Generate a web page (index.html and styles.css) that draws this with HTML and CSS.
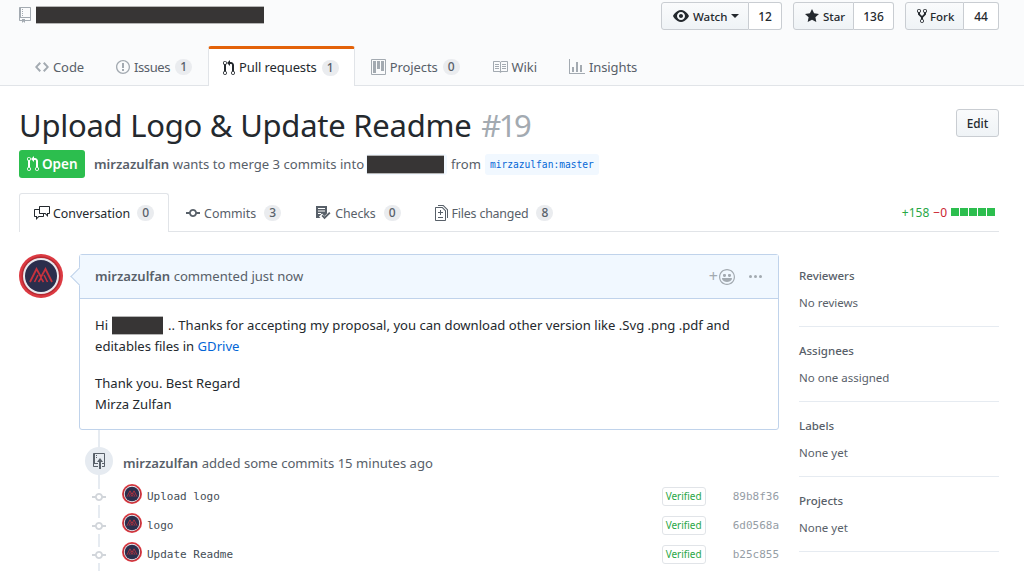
FILE: index.html
```html
<!DOCTYPE html>
<html lang="en">
<head>
<meta charset="utf-8">
<title>Upload Logo &amp; Update Readme</title>
<link rel="stylesheet" href="styles.css">
</head>
<body>
<svg class="defs" width="0" height="0" aria-hidden="true">
  <symbol id="logo" viewBox="0 0 44 44">
    <circle cx="22" cy="22" r="22" fill="#dc3a42"/>
    <circle cx="22" cy="22" r="19.500" fill="#b32a33"/>
    <circle cx="22" cy="22" r="18" fill="#e9e9ee"/>
    <circle cx="22" cy="22" r="16" fill="#2b2e4c"/>
    <path d="M11 28l6.500-13 4.500 8 4.500-8L33 28" fill="none" stroke="#c8323d" stroke-width="1.800"/>
    <path d="M15.500 28l3.500-7M28.500 28L25 21M19.500 28l2.500-4 2.500 4" fill="none" stroke="#c8323d" stroke-width="1.600"/>
  </symbol>
  <symbol id="commit" viewBox="0 0 14 16"><path d="M10.86 7c-.45-1.72-2-3-3.86-3-1.86 0-3.41 1.28-3.86 3H0v2h3.14c.45 1.72 2 3 3.86 3 1.86 0 3.41-1.28 3.86-3H14V7h-3.14zM7 10.2c-1.22 0-2.2-.98-2.2-2.2 0-1.22.98-2.2 2.2-2.2 1.22 0 2.2.98 2.2 2.2 0 1.22-.98 2.2-2.2 2.2z"/></symbol>
  <symbol id="pr" viewBox="0 0 12 16"><path d="M11 11.28V5c-.03-.78-.34-1.47-.94-2.06C9.46 2.35 8.78 2.03 8 2H7V0L4 3l3 3V4h1c.27.02.48.11.69.31.21.2.3.42.31.69v6.28A1.993 1.993 0 0 0 10 15a1.993 1.993 0 0 0 1-3.72zm-1 2.92c-.66 0-1.2-.55-1.2-1.2 0-.65.55-1.2 1.2-1.2.65 0 1.2.55 1.2 1.2 0 .65-.55 1.2-1.2 1.2zM4 3c0-1.11-.89-2-2-2a1.993 1.993 0 0 0-1 3.72v6.56A1.993 1.993 0 0 0 2 15a1.993 1.993 0 0 0 1-3.72V4.72c.59-.34 1-.98 1-1.72zm-.8 10c0 .66-.55 1.2-1.2 1.2-.65 0-1.2-.55-1.2-1.2 0-.65.55-1.2 1.2-1.2.65 0 1.2.55 1.2 1.2zM2 4.2C1.34 4.2.8 3.65.8 3c0-.65.55-1.2 1.2-1.2.65 0 1.2.55 1.2 1.2 0 .65-.55 1.2-1.2 1.2z"/></symbol>
</svg>

<header class="head">
  <div class="head-top">
    <div class="repo">
      <svg class="ico repo-ico" width="12" height="16" viewBox="0 0 12 16"><path d="M4 9H3V8h1v1zm0-3H3v1h1V6zm0-2H3v1h1V4zm0-2H3v1h1V2zm8-1v12c0 .55-.45 1-1 1H6v2l-1.5-1.5L3 16v-2H1c-.55 0-1-.45-1-1V1c0-.55.45-1 1-1h10c.55 0 1 .45 1 1zm-1 10H1v2h2v-1h3v1h5v-2zm0-10H2v9h9V1z"/></svg>
      <span class="redact redact-repo"></span>
    </div>
    <div class="actions">
      <div class="btn-group">
        <span class="btn btn-watch"><svg class="ico ico-dark" width="16" height="16" viewBox="0 0 16 16"><path d="M8.06 2C3 2 0 8 0 8s3 6 8.06 6C13 14 16 8 16 8s-3-6-7.94-6zM8 12c-2.2 0-4-1.78-4-4 0-2.2 1.8-4 4-4 2.22 0 4 1.8 4 4 0 2.22-1.78 4-4 4zm2-4c0 1.11-.89 2-2 2-1.11 0-2-.89-2-2 0-1.11.89-2 2-2 1.11 0 2 .89 2 2z"/></svg>Watch<i class="caret"></i></span>
        <span class="social w-watch">12</span>
      </div>
      <div class="btn-group">
        <span class="btn btn-star"><svg class="ico ico-dark" width="14" height="16" viewBox="0 0 14 16"><path d="M14 6l-4.9-.64L7 1 4.9 5.36 0 6l3.6 3.26L2.67 14 7 11.67 11.33 14l-.93-4.74L14 6z"/></svg>Star</span>
        <span class="social w-star">136</span>
      </div>
      <div class="btn-group">
        <span class="btn btn-fork"><svg class="ico ico-dark" width="10" height="16" viewBox="0 0 10 16"><path d="M8 1a1.993 1.993 0 0 0-1 3.72V6L5 8 3 6V4.72A1.993 1.993 0 0 0 2 1a1.993 1.993 0 0 0-1 3.72V6.5l3 3v1.78A1.993 1.993 0 0 0 5 15a1.993 1.993 0 0 0 1-3.72V9.5l3-3V4.72A1.993 1.993 0 0 0 8 1zM2 4.2C1.34 4.2.8 3.65.8 3c0-.65.55-1.2 1.2-1.2.65 0 1.2.55 1.2 1.2 0 .65-.55 1.2-1.2 1.2zm3 10c-.66 0-1.2-.55-1.2-1.2 0-.65.55-1.2 1.2-1.2.65 0 1.2.55 1.2 1.2 0 .65-.55 1.2-1.2 1.2zm3-10c-.66 0-1.2-.55-1.2-1.2 0-.65.55-1.2 1.2-1.2.65 0 1.2.55 1.2 1.2 0 .65-.55 1.2-1.2 1.2z"/></svg>Fork</span>
        <span class="social w-fork">44</span>
      </div>
    </div>
  </div>
  <nav class="repo-nav">
    <a class="rtab"><svg class="ico" width="14" height="16" viewBox="0 0 14 16"><path d="M9.5 3L8 4.5 11.5 8 8 11.5 9.5 13 14 8 9.5 3zm-5 0L0 8l4.5 5L6 11.5 2.5 8 6 4.5 4.5 3z"/></svg>Code</a>
    <a class="rtab rtab-issues"><svg class="ico" width="14" height="16" viewBox="0 0 14 16"><path d="M7 2.3c3.14 0 5.7 2.56 5.7 5.7s-2.56 5.7-5.7 5.7A5.71 5.71 0 0 1 1.3 8c0-3.14 2.56-5.7 5.7-5.7zM7 1C3.14 1 0 4.14 0 8s3.14 7 7 7 7-3.14 7-7-3.14-7-7-7zm1 3H6v5h2V4zm0 6H6v2h2v-2z"/></svg>Issues<span class="count">1</span></a>
    <a class="rtab rtab-on"><svg class="ico ico-dark" width="12" height="16"><use href="#pr"/></svg>Pull requests<span class="count">1</span></a>
    <a class="rtab"><svg class="ico" width="15" height="16" viewBox="0 0 15 16"><path d="M10 12h3V2h-3v10zm-4-2h3V2H6v8zm-4 4h3V2H2v12zm-1 1h13V1H1v14zM14 0H1a1 1 0 0 0-1 1v14a1 1 0 0 0 1 1h13a1 1 0 0 0 1-1V1a1 1 0 0 0-1-1z"/></svg>Projects<span class="count">0</span></a>
    <a class="rtab"><svg class="ico" width="16" height="16" viewBox="0 0 16 16"><path d="M3 5h4v1H3V5zm0 3h4V7H3v1zm0 2h4V9H3v1zm11-5h-4v1h4V5zm0 2h-4v1h4V7zm0 2h-4v1h4V9zm2-6v9c0 .55-.45 1-1 1H9.5l-1 1-1-1H2c-.55 0-1-.45-1-1V3c0-.55.45-1 1-1h5.5l1 1 1-1H15c.55 0 1 .45 1 1zm-8 .5L7.5 3H2v9h6V3.5zm7-.5H9.5l-.5.5V12h6V3z"/></svg>Wiki</a>
    <a class="rtab"><svg class="ico" width="16" height="16" viewBox="0 0 16 16"><path d="M16 14v1H0V0h1v14h15zM5 13H3V8h2v5zm4 0H7V3h2v10zm4 0h-2V6h2v7z"/></svg>Insights</a>
  </nav>
</header>

<main class="page">
  <div class="title-row">
    <h1 class="title">Upload Logo &amp; Update Readme <span class="num">#19</span></h1>
    <span class="edit">Edit</span>
  </div>
  <div class="state-row">
    <span class="state"><svg class="ico ico-white" width="12" height="16"><use href="#pr"/></svg>Open</span>
    <span class="meta"><b>mirzazulfan</b> wants to merge 3 commits into</span>
    <span class="ref ref-base"><span class="redact redact-ref"></span></span>
    <span class="meta">from</span>
    <span class="ref">mirzazulfan:master</span>
  </div>

  <div class="pr-tabs">
    <a class="ptab ptab-on"><svg class="ico ico-dark" width="16" height="16" viewBox="0 0 16 16"><path d="M15 1H6c-.55 0-1 .45-1 1v2H1c-.55 0-1 .45-1 1v6c0 .55.45 1 1 1h1v3l3-3h4c.55 0 1-.45 1-1V9h1l3 3V9h1c.55 0 1-.45 1-1V2c0-.55-.45-1-1-1zM9 11H4.5L3 12.5V11H1V5h4v3c0 .55.45 1 1 1h3v2zm6-3h-2v1.5L11.5 8H6V2h9v6z"/></svg>Conversation<span class="count">0</span></a>
    <a class="ptab"><svg class="ico ico-mid" width="14" height="16"><use href="#commit"/></svg>Commits<span class="count">3</span></a>
    <a class="ptab ptab-checks"><svg class="ico ico-mid" width="16" height="16" viewBox="0 0 16 16"><path d="M1 1h11v7.500L9.500 11 7 8.500l-3 3 1.500 1.500H1zM3 3v1h7V3zm0 2.500v1h7v-1zM3 8v1h3V8z"/><path d="M6.500 11l1.300-1.300 1.700 1.700L14.200 7l1.300 1.300-6 6z"/></svg>Checks<span class="count">0</span></a>
    <a class="ptab ptab-files"><svg class="ico ico-mid" width="13" height="16" viewBox="0 0 13 16"><path d="M6 7h2v1H6v2H5V8H3V7h2V5h1v2zm-3 6h5v-1H3v1zM7.500 2L11 5.500V15c0 .55-.45 1-1 1H1c-.55 0-1-.45-1-1V3c0-.55.45-1 1-1h6.500zM10 6L7 3H1v12h9V6zM8.500 0H3v1h5l4 4v8h1V4.500L8.500 0z"/></svg>Files changed<span class="count">8</span></a>
    <div class="stats">
      <span class="add">+158</span>
      <span class="del">−0</span>
      <span class="blocks"><i></i><i></i><i></i><i></i><i></i></span>
    </div>
  </div>

  <div class="layout">
    <section class="discussion">
      <div class="thread">
        <svg class="avatar" width="44" height="44"><use href="#logo"/></svg>
        <article class="comment">
          <div class="comment-head">
            <span class="comment-who"><b>mirzazulfan</b> commented just now</span>
            <span class="comment-tools">
              <span class="plus">+</span>
              <svg class="ico" width="16" height="16" viewBox="0 0 16 16"><path d="M8 0C3.580 0 0 3.580 0 8s3.580 8 8 8 8-3.580 8-8-3.580-8-8-8zm4.810 12.810a6.720 6.720 0 0 1-2.170 1.450c-.83.36-1.720.53-2.640.53-.92 0-1.810-.17-2.640-.53-.81-.34-1.550-.83-2.170-1.450a6.773 6.773 0 0 1-1.450-2.170A6.590 6.590 0 0 1 1.210 8c0-.92.17-1.810.53-2.640.34-.81.83-1.550 1.450-2.170.62-.62 1.360-1.110 2.170-1.450A6.590 6.590 0 0 1 8 1.210c.92 0 1.810.17 2.640.53.81.34 1.550.83 2.170 1.450.62.62 1.110 1.360 1.450 2.170.36.83.53 1.720.53 2.640 0 .92-.17 1.810-.53 2.640-.34.81-.83 1.550-1.450 2.170zM4 6.800v-.59c0-.66.53-1.190 1.200-1.190h.59c.66 0 1.190.53 1.190 1.190v.59c0 .67-.53 1.200-1.190 1.200H5.200C4.530 8 4 7.470 4 6.800zm5 0v-.59c0-.66.53-1.190 1.200-1.190h.59c.66 0 1.190.53 1.190 1.190v.59c0 .67-.53 1.200-1.190 1.200h-.59C9.530 8 9 7.470 9 6.800zm4 3.200c-.72 1.880-2.910 3-5 3s-4.280-1.130-5-3c-.14-.39.23-1 .66-1h8.590c.41 0 .89.61.75 1z"/></svg>
              <svg class="ico kebab" width="13" height="16" viewBox="0 0 13 16"><path d="M1.500 9a1.500 1.500 0 1 0 0-3 1.500 1.500 0 0 0 0 3zm5 0a1.500 1.500 0 1 0 0-3 1.500 1.500 0 0 0 0 3zM13 7.500a1.500 1.500 0 1 1-3 0 1.500 1.500 0 0 1 3 0z"/></svg>
            </span>
          </div>
          <div class="comment-body">
            <p>Hi <span class="redact redact-name"></span> .. Thanks for accepting my proposal, you can download other version like .Svg .png .pdf and<br>editables files in <a class="link">GDrive</a></p>
            <p>Thank you. Best Regard<br>Mirza Zulfan</p>
          </div>
        </article>
      </div>

      <div class="timeline">
        <div class="push">
          <span class="push-badge"><svg class="ico ico-mid" width="12" height="16" viewBox="0 0 12 16"><path d="M4 3H3V2h1v1zM3 5h1V4H3v1zm4 0L4 9h2v7h2V9h2L7 5zm4-5H1C.45 0 0 .45 0 1v12c0 .55.45 1 1 1h4v-1H1v-2h4v-1H2V1h9.020L11 10H9v1h2v2H9v1h2c.55 0 1-.45 1-1V1c0-.55-.45-1-1-1z"/></svg></span>
          <span class="push-text"><b>mirzazulfan</b> added some commits 15 minutes ago</span>
        </div>
        <div class="crow">
          <svg class="cdot" width="14" height="16"><use href="#commit"/></svg>
          <svg class="cavatar" width="20" height="20"><use href="#logo"/></svg>
          <span class="cmsg">Upload logo</span>
          <span class="verified">Verified</span>
          <span class="sha">89b8f36</span>
        </div>
        <div class="crow">
          <svg class="cdot" width="14" height="16"><use href="#commit"/></svg>
          <svg class="cavatar" width="20" height="20"><use href="#logo"/></svg>
          <span class="cmsg">logo</span>
          <span class="verified">Verified</span>
          <span class="sha">6d0568a</span>
        </div>
        <div class="crow">
          <svg class="cdot" width="14" height="16"><use href="#commit"/></svg>
          <svg class="cavatar" width="20" height="20"><use href="#logo"/></svg>
          <span class="cmsg">Update Readme</span>
          <span class="verified">Verified</span>
          <span class="sha">b25c855</span>
        </div>
      </div>
    </section>

    <aside class="sidebar">
      <div class="side"><h3>Reviewers</h3><p>No reviews</p></div>
      <div class="side"><h3>Assignees</h3><p>No one assigned</p></div>
      <div class="side"><h3>Labels</h3><p>None yet</p></div>
      <div class="side"><h3>Projects</h3><p>None yet</p></div>
    </aside>
  </div>
</main>
</body>
</html>
```
FILE: styles.css
```css
* { box-sizing: border-box; }
html, body { margin: 0; padding: 0; height: 571px; overflow: hidden; }
body { font-family: "Noto Sans", "Open Sans", sans-serif; font-size: 13.1px; color: #24292e; background: #fff; line-height: 21px; }
.defs { position: absolute; }
b { font-weight: 600; }
.ico { fill: #a3aab1; fill-rule: evenodd; flex: none; display: block; }
.ico-dark { fill: #24292e; }
.ico-mid { fill: #586069; }
.ico-white { fill: #fff; }

.head { height: 86px; background: #fafbfc; border-bottom: 1px solid #e1e4e8; }
.head-top { height: 46px; padding: 2px 25px 0 19px; display: flex; justify-content: space-between; }
.repo { display: flex; gap: 5px; align-items: flex-start; }
.repo-ico { margin-top: 5px; }
.redact { display: inline-block; background: #373535; border: 1px solid #b5b5b5; border-width: 1px 0; }
.redact-repo { width: 228px; height: 18px; margin-top: 4px; }
.actions { display: flex; gap: 11px; }
.btn-group { display: flex; height: 28px; }
.btn { display: flex; align-items: center; gap: 4px; height: 28px; padding-left: 11px; background: linear-gradient(#fafbfc, #eff3f6); border: 1px solid #c9cdd2; border-radius: 3px 0 0 3px; font-weight: 500; font-size: 11.500px; }
.btn-watch { width: 88px; }
.btn-star { width: 61px; }
.btn-fork { width: 59px; gap: 3px; }
.caret { width: 0; height: 0; border: 4px solid transparent; border-top-color: #24292e; border-bottom: 0; }
.social { display: flex; align-items: center; justify-content: center; height: 28px; background: #fff; border: 1px solid #c9cdd2; border-left: 0; border-radius: 0 3px 3px 0; font-weight: 500; font-size: 12px; }
.w-watch { width: 33px; }
.w-star { width: 40px; }
.w-fork { width: 35px; }

.repo-nav { display: flex; padding-left: 19px; height: 40px; }
.rtab { display: flex; align-items: center; gap: 4px; padding: 2px 16px 0; height: 40px; font-size: 13px; letter-spacing: -.1px; color: #586069; }
.rtab-issues { letter-spacing: -.4px; }
.rtab-on { padding: 0 15px 0 14px; color: #24292e; background: #fff; border: 1px solid #e1e4e8; border-top: 3px solid #e36209; border-bottom: 0; border-radius: 3px 3px 0 0; }
.count { display: inline-block; width: 17px; height: 16px; margin-left: 1px; border-radius: 8px; line-height: 16px; font-size: 12px; font-weight: 500; letter-spacing: 0; color: #586069; background: #eaecef; text-align: center; }

.page { padding: 0 25px 0 19px; }
.title-row { display: flex; justify-content: space-between; align-items: flex-start; padding-top: 19px; height: 64px; }
.title { margin: 0; font-size: 31px; font-weight: 400; line-height: 40px; letter-spacing: -.25px; }
.num { color: #a3aab1; margin-left: 2px; letter-spacing: -2.500px; }
.edit { display: flex; align-items: center; justify-content: center; width: 43px; height: 28px; margin-top: 4px; font-size: 11.800px; font-weight: 500; background: linear-gradient(#fafbfc, #eff3f6); border: 1px solid #c9cdd2; border-radius: 3px; }
.state-row { display: flex; align-items: center; height: 28px; color: #586069; }
.state { display: flex; align-items: center; gap: 3px; width: 66px; height: 28px; padding-left: 8px; background: #2cbe4e; color: #fff; font-weight: 600; font-size: 13.500px; border-radius: 3px; margin-right: 9px; }
.meta { white-space: nowrap; }
.meta b { color: #586069; }
.ref { display: inline-block; height: 21px; padding: 0 5px; line-height: 21px; font-family: "DejaVu Sans Mono", monospace; font-size: 9.600px; color: #0366d6; background: #f1f8ff; border-radius: 3px; margin-left: 4px; }
.ref-base { display: flex; width: 81px; padding: 1px 3px 0 1px; margin: 0 4px 0 2px; }
.redact-ref { width: 77px; height: 19px; }

.pr-tabs { display: flex; margin-top: 15px; height: 39px; border-bottom: 1px solid #e1e4e8; }
.ptab { display: flex; align-items: center; gap: 4px; height: 39px; padding: 1px 17px 0; font-size: 12.400px; color: #586069; }
.ptab .count { margin-left: 4px; }
.ptab-on { gap: 3px; padding: 0 14px; color: #24292e; background: #fff; border: 1px solid #e1e4e8; border-bottom: 0; border-radius: 3px 3px 0 0; }
.ptab-checks { letter-spacing: -.1px; }
.ptab-files { letter-spacing: -.2px; }
.stats { margin-left: auto; display: flex; align-items: center; gap: 4px; padding-right: 4px; font-size: 12px; }
.add { color: #28a745; }
.del { color: #cb2431; }
.blocks { display: flex; gap: 1px; }
.blocks i { width: 8px; height: 8px; background: #2cbe4e; }

.layout { display: grid; grid-template-columns: 760px 200px; column-gap: 20px; margin-top: 22px; }
.thread { display: flex; gap: 16px; }
.avatar { flex: none; display: block; }
.comment { position: relative; width: 700px; height: 176px; border: 1px solid #c0d3eb; border-radius: 3px; }
.comment::before { content: ""; position: absolute; left: -7px; top: 15px; width: 12px; height: 12px; background: #f1f8ff; border: 1px solid #c0d3eb; border-width: 0 0 1px 1px; transform: rotate(45deg); }
.comment-head { position: relative; display: flex; justify-content: space-between; align-items: center; height: 44px; padding: 0 15px; background: #f1f8ff; border-bottom: 1px solid #c0d3eb; color: #586069; }
.comment-tools { display: flex; align-items: center; gap: 1px; margin-right: 1px; }
.plus { font-size: 16px; color: #a3aab1; }
.kebab { margin-left: 13px; }
.comment-body { padding: 16px 15px 15px; }
.comment-body p { margin: 0 0 16px; }
.comment-body p:last-child { margin: 0; }
.redact-name { width: 51px; height: 19px; margin-right: 2px; vertical-align: -5px; }
.link { color: #0366d6; }

.timeline { position: relative; margin-left: 60px; width: 700px; padding: 17px 0 0 6px; }
.timeline::before { content: ""; position: absolute; left: 19px; top: 0; height: 141px; width: 2px; background: #e6ebf1; }
.push { position: relative; display: flex; align-items: center; gap: 10px; height: 28px; color: #586069; }
.push-badge { display: flex; align-items: center; justify-content: center; width: 28px; height: 28px; border-radius: 50%; background: #e6ebf1; }
.push-text { padding-top: 5px; }
.push b { color: #586069; }
.crow { position: relative; display: flex; align-items: center; height: 29px; margin-left: 7px; }
.push + .crow { margin-top: 7px; }
.cdot { fill: #d1d5da; background: #fff; flex: none; margin-right: 16px; }
.cavatar { flex: none; margin: 0 5px 6px 0; display: block; }
.cmsg, .sha { font-family: "DejaVu Sans Mono", monospace; font-size: 11px; }
.cmsg { color: #444d56; white-space: nowrap; flex: 1; }
.verified { display: flex; align-items: center; justify-content: center; width: 44px; height: 19px; font-size: 10px; color: #28a745; border: 1px solid #e1e4e8; border-radius: 3px; }
.sha { color: #959da5; margin-left: 27px; }

.sidebar { margin-top: -2px; }
.side { height: 75px; padding: 15px 0 0; border-bottom: 1px solid #e6ebf1; font-size: 11.500px; color: #586069; }
.side h3 { margin: 0 0 9px; font-size: 11.500px; font-weight: 500; line-height: 18px; }
.side p { margin: 0; line-height: 18px; }
```
